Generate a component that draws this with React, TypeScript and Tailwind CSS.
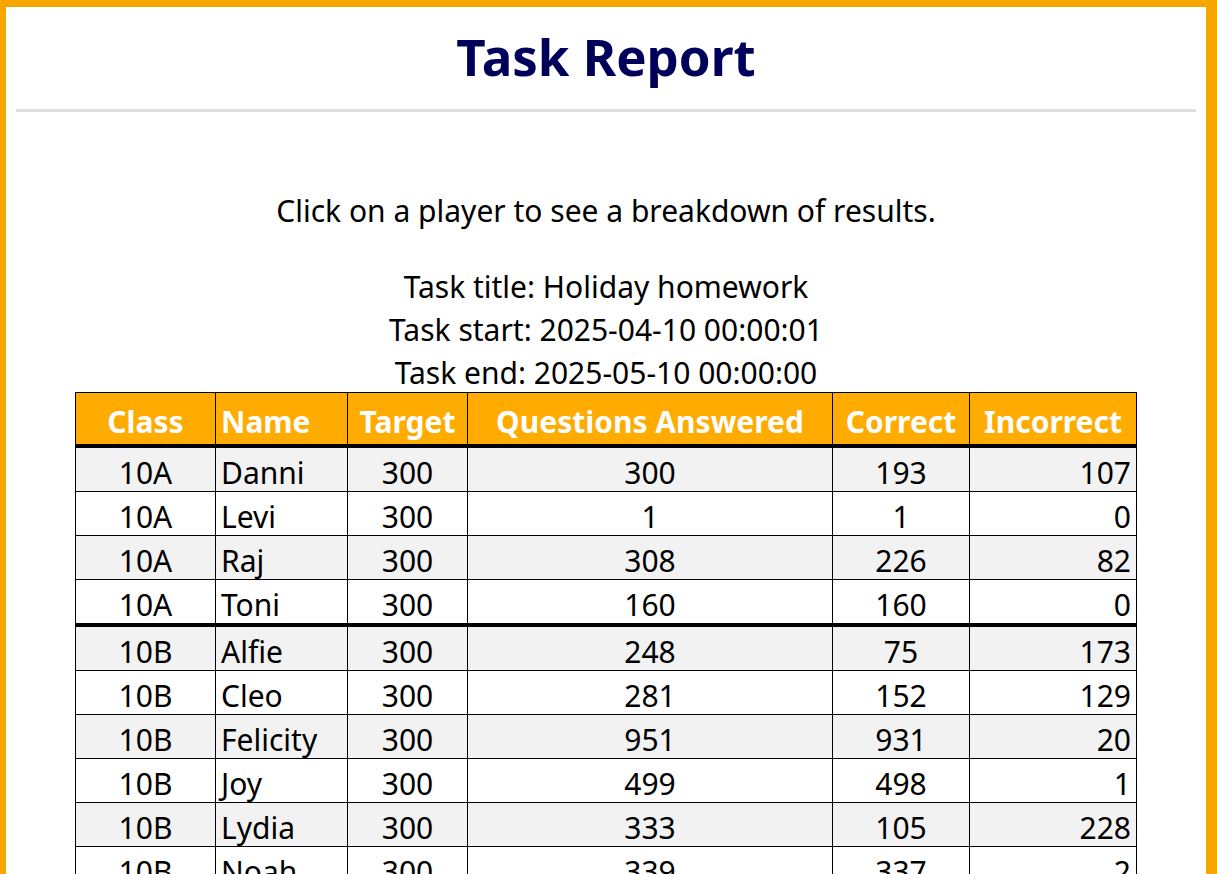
import React from 'react';

type Row = {
  cls: string;
  name: string;
  target: number;
  answered: number;
  correct: number;
  incorrect: number;
};

const rows: Row[] = [
  { cls: '10A', name: 'Danni', target: 300, answered: 300, correct: 193, incorrect: 107 },
  { cls: '10A', name: 'Levi', target: 300, answered: 1, correct: 1, incorrect: 0 },
  { cls: '10A', name: 'Raj', target: 300, answered: 308, correct: 226, incorrect: 82 },
  { cls: '10A', name: 'Toni', target: 300, answered: 160, correct: 160, incorrect: 0 },
  { cls: '10B', name: 'Alfie', target: 300, answered: 248, correct: 75, incorrect: 173 },
  { cls: '10B', name: 'Cleo', target: 300, answered: 281, correct: 152, incorrect: 129 },
  { cls: '10B', name: 'Felicity', target: 300, answered: 951, correct: 931, incorrect: 20 },
  { cls: '10B', name: 'Joy', target: 300, answered: 499, correct: 498, incorrect: 1 },
  { cls: '10B', name: 'Lydia', target: 300, answered: 333, correct: 105, incorrect: 228 },
  { cls: '10B', name: 'Noah', target: 300, answered: 339, correct: 337, incorrect: 2 },
];

const cell = 'border border-black px-[5px] pt-[6px] pb-0';
const head = 'border border-b-4 border-black px-[5px] pt-[10px] pb-[4px] font-bold';

export default function App() {
  return (
    <div
      className="min-h-screen bg-[#f7a600] pt-[7px] pl-[6px] pr-[11px] text-black"
      style={{ fontFamily: '"Noto Sans", "Open Sans", sans-serif' }}
    >
      <div className="min-h-[867px] bg-white">
        <h1 className="pt-[12px] pb-[16px] text-center text-[51px] font-bold leading-[74px] text-[#00005a]">
          Task Report
        </h1>
        <div className="mx-[10px] h-[3px] bg-[#dddde2]" />

        <p className="mt-[78px] text-center text-[30px] leading-[42px]">
          Click on a player to see a breakdown of results.
        </p>

        <div className="mt-[33px] text-center text-[30px] leading-[43px]">
          <p>Task title: Holiday homework</p>
          <p>Task start: 2025-04-10 00:00:01</p>
          <p>Task end: 2025-05-10 00:00:00</p>
        </div>

        <table className="mx-[69px] -mt-[2px] w-[1062px] border-collapse text-[30px] leading-[37px]">
          <thead>
            <tr className="bg-[#ffab00] text-white">
              <th className={`${head} w-[140px] text-center`}>Class</th>
              <th className={`${head} w-[132px] text-left`}>Name</th>
              <th className={`${head} w-[120px] text-center`}>Target</th>
              <th className={`${head} w-[365px] text-center`}>Questions Answered</th>
              <th className={`${head} w-[137px] text-center`}>Correct</th>
              <th className={`${head} text-center`}>Incorrect</th>
            </tr>
          </thead>
          <tbody>
            {rows.map((r, i) => {
              const groupEnd = i < rows.length - 1 && rows[i + 1].cls !== r.cls;
              const b = groupEnd ? 'border-b-4' : '';
              return (
                <tr key={r.name} className={i % 2 === 0 ? 'bg-[#f2f2f2]' : 'bg-white'}>
                  <td className={`${cell} ${b} text-center`}>{r.cls}</td>
                  <td className={`${cell} ${b} text-left`}>{r.name}</td>
                  <td className={`${cell} ${b} text-center`}>{r.target}</td>
                  <td className={`${cell} ${b} text-center`}>{r.answered}</td>
                  <td className={`${cell} ${b} text-center`}>{r.correct}</td>
                  <td className={`${cell} ${b} text-right`}>{r.incorrect}</td>
                </tr>
              );
            })}
          </tbody>
        </table>
      </div>
    </div>
  );
}
